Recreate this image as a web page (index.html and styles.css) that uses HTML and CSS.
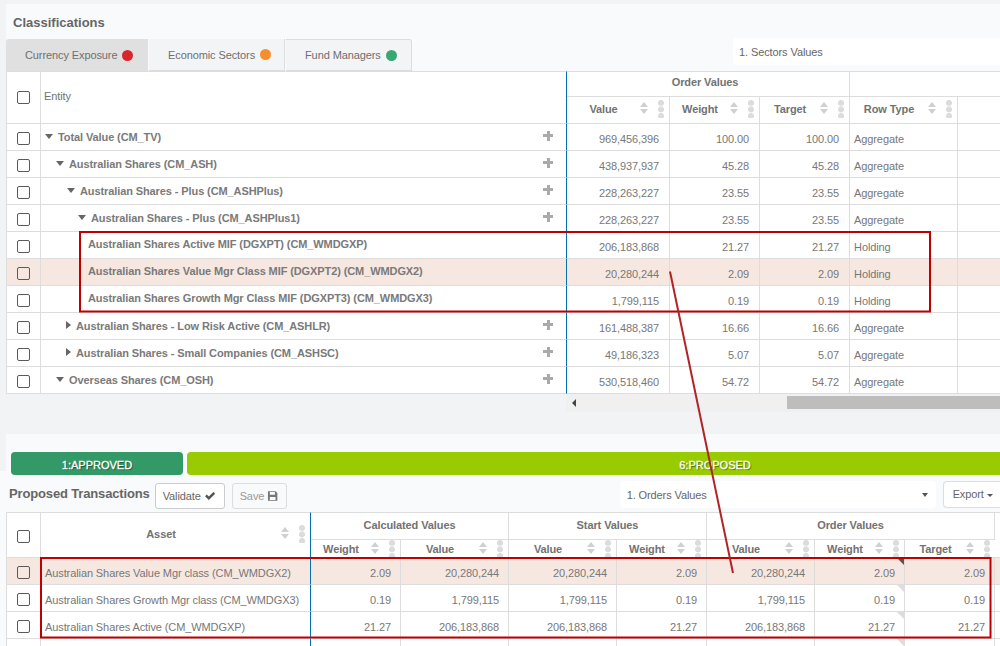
FILE: index.html
```html
<!DOCTYPE html>
<html>
<head>
  <title>Classifications</title>
  <link rel="stylesheet" href="styles.css">
</head>
<body>
  <section class="top-panel">
    <h3 class="panel-title">Classifications</h3>
    <div class="tab-row">
      <div class="tabs">
        <div class="tab active">Currency Exposure <span class="dot red"></span></div>
        <div class="tab">Economic Sectors <span class="dot orange"></span></div>
        <div class="tab last">Fund Managers <span class="dot green"></span></div>
      </div>
      <div class="view-select">1. Sectors Values</div>
    </div>

    <div class="table-wrap">
      <table class="grid">
        <colgroup>
          <col class="c-check"><col class="c-entity"><col class="c-value"><col class="c-w90"><col class="c-w90"><col class="c-type"><col class="c-rest">
        </colgroup>
        <thead>
          <tr class="group-row">
            <th rowspan="2" class="first"><span class="check"></span></th>
            <th rowspan="2" class="entity-head pin">Entity</th>
            <th colspan="3"><span class="group-label">Order Values</span></th>
            <th colspan="2"></th>
          </tr>
          <tr class="sub-row">
            <th><div class="head"><span class="label">Value</span><i class="sort"></i><i class="dots"></i></div></th>
            <th><div class="head"><span class="label">Weight</span><i class="sort"></i><i class="dots"></i></div></th>
            <th><div class="head"><span class="label">Target</span><i class="sort"></i><i class="dots"></i></div></th>
            <th><div class="head"><span class="label">Row Type</span><i class="sort"></i><i class="dots"></i></div></th>
            <th></th>
          </tr>
        </thead>
        <tbody>
          <tr>
            <td class="first"><span class="check"></span></td>
            <td class="pin"><div class="name lvl0"><i class="caret-down"></i>Total Value (CM_TV)<i class="plus"></i></div></td>
            <td class="num">969,456,396</td><td class="num">100.00</td><td class="num">100.00</td><td class="txt">Aggregate</td><td></td>
          </tr>
          <tr>
            <td class="first"><span class="check"></span></td>
            <td class="pin"><div class="name lvl1"><i class="caret-down"></i>Australian Shares (CM_ASH)<i class="plus"></i></div></td>
            <td class="num">438,937,937</td><td class="num">45.28</td><td class="num">45.28</td><td class="txt">Aggregate</td><td></td>
          </tr>
          <tr>
            <td class="first"><span class="check"></span></td>
            <td class="pin"><div class="name lvl2"><i class="caret-down"></i>Australian Shares - Plus (CM_ASHPlus)<i class="plus"></i></div></td>
            <td class="num">228,263,227</td><td class="num">23.55</td><td class="num">23.55</td><td class="txt">Aggregate</td><td></td>
          </tr>
          <tr>
            <td class="first"><span class="check"></span></td>
            <td class="pin"><div class="name lvl3"><i class="caret-down"></i>Australian Shares - Plus (CM_ASHPlus1)<i class="plus"></i></div></td>
            <td class="num">228,263,227</td><td class="num">23.55</td><td class="num">23.55</td><td class="txt">Aggregate</td><td></td>
          </tr>
          <tr>
            <td class="first"><span class="check"></span></td>
            <td class="pin"><div class="name leaf">Australian Shares Active MIF (DGXPT) (CM_WMDGXP)</div></td>
            <td class="num">206,183,868</td><td class="num">21.27</td><td class="num">21.27</td><td class="txt">Holding</td><td></td>
          </tr>
          <tr class="picked">
            <td class="first"><span class="check"></span></td>
            <td class="pin"><div class="name leaf">Australian Shares Value Mgr Class MIF (DGXPT2) (CM_WMDGX2)</div></td>
            <td class="num">20,280,244</td><td class="num">2.09</td><td class="num">2.09</td><td class="txt">Holding</td><td></td>
          </tr>
          <tr>
            <td class="first"><span class="check"></span></td>
            <td class="pin"><div class="name leaf">Australian Shares Growth Mgr Class MIF (DGXPT3) (CM_WMDGX3)</div></td>
            <td class="num">1,799,115</td><td class="num">0.19</td><td class="num">0.19</td><td class="txt">Holding</td><td></td>
          </tr>
          <tr>
            <td class="first"><span class="check"></span></td>
            <td class="pin"><div class="name lvl2r"><i class="caret-right"></i>Australian Shares - Low Risk Active (CM_ASHLR)<i class="plus"></i></div></td>
            <td class="num">161,488,387</td><td class="num">16.66</td><td class="num">16.66</td><td class="txt">Aggregate</td><td></td>
          </tr>
          <tr>
            <td class="first"><span class="check"></span></td>
            <td class="pin"><div class="name lvl2r"><i class="caret-right"></i>Australian Shares - Small Companies (CM_ASHSC)<i class="plus"></i></div></td>
            <td class="num">49,186,323</td><td class="num">5.07</td><td class="num">5.07</td><td class="txt">Aggregate</td><td></td>
          </tr>
          <tr>
            <td class="first"><span class="check"></span></td>
            <td class="pin"><div class="name lvl1"><i class="caret-down"></i>Overseas Shares (CM_OSH)<i class="plus"></i></div></td>
            <td class="num">530,518,460</td><td class="num">54.72</td><td class="num">54.72</td><td class="txt">Aggregate</td><td></td>
          </tr>
        </tbody>
      </table>
    </div>
    <div class="h-scroll"><i class="arrow-left"></i><span class="thumb"></span></div>
  </section>

  <section class="bottom-panel">
    <div class="status-bar">
      <div class="status approved">1:APPROVED</div>
      <div class="status proposed">6:PROPOSED</div>
    </div>
    <div class="toolbar">
      <h3 class="toolbar-title">Proposed Transactions</h3>
      <button class="btn validate">Validate
        <svg class="ico" viewBox="0 0 12 12"><path d="M1 6.3 L2.8 4.5 L4.8 6.5 L9.4 1.9 L11.2 3.7 L4.8 10.1 Z" fill="#555"/></svg>
      </button>
      <button class="btn muted">Save
        <svg class="ico" viewBox="0 0 12 12"><path fill-rule="evenodd" d="M1 1 H9.2 L11 2.8 V11 H1 Z M3 1.8 V4.6 H8.4 V1.8 Z M3 7 V10.2 H9 V7 Z" fill="#777"/></svg>
      </button>
      <div class="orders-select">1. Orders Values<i class="select-caret"></i></div>
      <button class="btn export">Export<i class="export-caret"></i></button>
    </div>

    <div class="table-wrap inset">
      <table class="grid grid-bottom">
        <colgroup>
          <col class="c-check"><col class="c-asset"><col class="c-w90"><col class="c-w108"><col class="c-w108"><col class="c-w90"><col class="c-w108"><col class="c-w90"><col class="c-w90"><col class="c-tail">
        </colgroup>
        <thead>
          <tr class="group-row">
            <th rowspan="2" class="first"><span class="check"></span></th>
            <th rowspan="2" class="pin"><div class="head"><span class="label">Asset</span><i class="sort"></i><i class="dots"></i></div></th>
            <th colspan="2">Calculated Values</th>
            <th colspan="2">Start Values</th>
            <th colspan="3">Order Values</th>
            <th rowspan="2" class="tail"></th>
          </tr>
          <tr class="sub-row">
            <th><div class="head"><span class="label">Weight</span><i class="sort"></i><i class="dots"></i></div></th>
            <th><div class="head"><span class="label">Value</span><i class="sort"></i><i class="dots"></i></div></th>
            <th><div class="head"><span class="label">Value</span><i class="sort"></i><i class="dots"></i></div></th>
            <th><div class="head"><span class="label">Weight</span><i class="sort"></i><i class="dots"></i></div></th>
            <th><div class="head"><span class="label">Value</span><i class="sort"></i><i class="dots"></i></div></th>
            <th><div class="head"><span class="label">Weight</span><i class="sort"></i><i class="dots"></i></div></th>
            <th><div class="head"><span class="label">Target</span><i class="sort"></i><i class="dots"></i></div></th>
          </tr>
        </thead>
        <tbody>
          <tr class="picked">
            <td class="first"><span class="check"></span></td>
            <td class="pin txt">Australian Shares Value Mgr class (CM_WMDGX2)</td>
            <td class="num">2.09</td><td class="num">20,280,244</td><td class="num">20,280,244</td><td class="num">2.09</td><td class="num">20,280,244</td>
            <td class="num flag dark">2.09</td><td class="num">2.09</td><td class="tail"></td>
          </tr>
          <tr>
            <td class="first"><span class="check"></span></td>
            <td class="pin txt">Australian Shares Growth Mgr class (CM_WMDGX3)</td>
            <td class="num">0.19</td><td class="num">1,799,115</td><td class="num">1,799,115</td><td class="num">0.19</td><td class="num">1,799,115</td>
            <td class="num flag">0.19</td><td class="num">0.19</td><td class="tail"></td>
          </tr>
          <tr>
            <td class="first"><span class="check"></span></td>
            <td class="pin txt">Australian Shares Active (CM_WMDGXP)</td>
            <td class="num">21.27</td><td class="num">206,183,868</td><td class="num">206,183,868</td><td class="num">21.27</td><td class="num">206,183,868</td>
            <td class="num flag">21.27</td><td class="num">21.27</td><td class="tail"></td>
          </tr>
          <tr>
            <td class="first"></td><td class="pin"></td><td></td><td></td><td></td><td></td><td></td><td class="flag"></td><td></td><td class="tail"></td>
          </tr>
        </tbody>
      </table>
    </div>
  </section>

  <!-- hand drawn annotations on top of the screenshot -->
  <svg class="marks" viewBox="0 0 1000 646">
    <rect x="80" y="232" width="850" height="79.5" />
    <rect x="41" y="558" width="949.5" height="79.5" />
    <line x1="670" y1="271.5" x2="733" y2="573" />
  </svg>
</body>
</html>
```

FILE: styles.css
```css
* { box-sizing: border-box; }

html, body { height: 100%; }

body {
  position: relative;
  width: 1000px;
  height: 646px;
  margin: 0;
  overflow: hidden;
  background: #f2f3f5;
  font-family: "Liberation Sans", Arial, sans-serif;
  font-size: 11px;
  letter-spacing: -0.1px;
  color: #707070;
}

/* top panel */
.top-panel { margin: 4px 0 0 6px; height: 430px; }

.panel-title {
  height: 35px;
  margin: 0;
  padding: 11px 0 0 7px;
  background: #f9fafc;
  font-size: 13px;
  line-height: 15px;
  letter-spacing: 0;
  color: #666;
}

.tab-row {
  display: flex;
  justify-content: space-between;
  align-items: flex-start;
  height: 32px;
  background: #f9fafc;
}

.tabs { display: flex; gap: 1px; }

.tab {
  display: flex;
  align-items: center;
  gap: 5px;
  width: 136px;
  height: 32px;
  padding-left: 19px;
  white-space: nowrap;
  background: #f3f4f6;
  border-bottom: 1px solid #ddd;
  border-right: 1px solid #ddd;
  color: #6f6f6f;
}
.tab.active { width: 142px; background: #e0e0e0; border: 0; border-radius: 3px 0 0 0; }
.tab.last { width: 126px; border-top: 1px solid #ddd; border-radius: 0 3px 0 0; }

.dot { width: 11px; height: 11px; border-radius: 50%; }
.dot.red { background: #d9262c; }
.dot.orange { background: #f68e2f; }
.dot.green { background: #36a874; }

.view-select {
  width: 267px;
  height: 27px;
  margin-top: -1px;
  padding: 1px 6px 0;
  background: #fff;
  border-radius: 4px 0 0 4px;
  line-height: 27px;
  color: #666;
}

/* tables */
.table-wrap { overflow: hidden; }
.table-wrap.inset { margin-left: 6px; }

.grid {
  width: 994px;
  table-layout: fixed;
  border-collapse: separate;
  border-spacing: 0;
  background: #fff;
}

.c-check { width: 35px; }
.c-entity { width: 526px; }
.c-value { width: 103px; }
.c-w90 { width: 90px; }
.c-w108 { width: 108px; }
.c-type { width: 108px; }
.c-rest { width: 42px; }
.c-asset { width: 270px; }
.c-tail { width: 5px; }

.grid th, .grid td {
  padding: 0;
  border-right: 1px solid #ddd;
  border-bottom: 1px solid #ddd;
}
.grid thead tr:first-child th { border-top: 1px solid #ddd; }
.grid .first { border-left: 1px solid #ddd; text-align: center; }
.grid .pin { border-right-color: #0070b0; }
.grid .tail, .grid tr > :last-child { border-right: 0; }

.grid th { font-weight: bold; color: #727272; text-align: center; }
.grid tbody tr { height: 27px; }

.group-row { height: 26px; }
.sub-row { height: 27px; }
.sub-row .head { padding-bottom: 2px; }
.grid-bottom .group-row { height: 28px; }
.grid-bottom .group-row th { padding-bottom: 2px; }
.grid-bottom .sub-row { height: 18px; }
.grid-bottom .sub-row .head { height: 17px; padding-bottom: 0; overflow: hidden; }

.group-label { display: block; padding: 0 6px 4px 0; }

.grid .entity-head { padding: 0 0 3px 3px; text-align: left; font-weight: normal; }

.head { display: flex; align-items: center; padding-right: 5px; }
.head .label { flex: 1; text-align: center; }

.sort {
  position: relative;
  width: 9px;
  height: 12px;
  margin: -2px 9px 0 0;
}
.sort::before, .sort::after {
  content: "";
  position: absolute;
  left: 0;
  border-left: 4.5px solid transparent;
  border-right: 4.5px solid transparent;
}
.sort::before { top: 0; border-bottom: 5px solid #d0d0d0; }
.sort::after { bottom: 0; border-top: 5px solid #d0d0d0; }

.dots {
  flex: none;
  width: 6px;
  height: 18px;
  background: radial-gradient(circle at 3px 3px, #dcdcdc 2.8px, transparent 3.2px) 0 0 / 6px 6.5px;
}

.check {
  display: inline-block;
  width: 13px;
  height: 13px;
  margin: 0 1px 1px 0;
  vertical-align: middle;
  background: #fff;
  border: 1.5px solid #5a5a5a;
  border-radius: 2px;
}
tbody .check { margin: 3px 1px 0 0; }
.grid-bottom thead .check { margin: 5px 1px 0 0; }

.name {
  display: flex;
  align-items: center;
  height: 26px;
  padding-bottom: 1px;
  padding-right: 13px;
  font-weight: bold;
  color: #7a7a7a;
}
.lvl0 { padding-left: 4px; }
.lvl1 { padding-left: 15px; }
.lvl2 { padding-left: 26px; }
.lvl3 { padding-left: 37px; }
.lvl2r { padding-left: 25px; }
.leaf { padding: 0 0 3px 47px; }

.caret-down {
  width: 0;
  height: 0;
  margin-right: 5px;
  border-left: 4px solid transparent;
  border-right: 4px solid transparent;
  border-top: 5px solid #666;
}
.caret-right {
  width: 0;
  height: 0;
  margin: -2px 5px 0 0;
  border-top: 4px solid transparent;
  border-bottom: 4px solid transparent;
  border-left: 5px solid #666;
}

.plus {
  width: 10px;
  height: 10px;
  margin: -2px 0 0 auto;
  background:
    linear-gradient(#aaa, #aaa) center / 10px 3px no-repeat,
    linear-gradient(#aaa, #aaa) center / 3px 10px no-repeat;
}

.grid .num { padding: 3px 10px 0 0; text-align: right; color: #787878; }
.grid .txt { padding: 3px 0 0 4px; color: #777; }
.grid-bottom .txt { padding-top: 4px; }
.grid-bottom .num { padding: 4px 9px 0 0; }

.picked td { background: #f6e8e1; }
.picked .check { background: transparent; }

.flag { position: relative; }
.flag::after {
  content: "";
  position: absolute;
  top: 0;
  right: 0;
  border-top: 7px solid #ddd;
  border-left: 7px solid transparent;
}
.flag.dark::after { border-top-color: #555; }

.h-scroll {
  display: flex;
  align-items: center;
  height: 18px;
  margin-left: 560px;
  padding: 0 0 1px 6px;
  background: #f0f0f0;
}
.arrow-left {
  width: 0;
  height: 0;
  border-top: 4px solid transparent;
  border-bottom: 4px solid transparent;
  border-right: 4px solid #444;
}
.thumb { width: 213px; height: 13px; margin-left: auto; background: #bdbdbd; }

/* bottom panel */
.bottom-panel {
  height: 212px;
  padding-top: 18px;
  background: linear-gradient(#f2f3f5, #f2f3f5) left top / 6px 37px no-repeat, #f9fafc;
}

.status-bar { display: flex; gap: 4px; margin-left: 11px; }

.status {
  flex: none;
  height: 23px;
  border-radius: 4px;
  color: #fff;
  line-height: 26px;
  letter-spacing: 0;
  text-align: center;
  text-shadow: 1px 1px 1px rgba(0,0,0,0.5);
  -webkit-text-stroke: 0.3px #fff;
}
.approved { width: 172px; background: #339966; }
.proposed { width: 813px; padding-left: 243px; border-radius: 4px 0 0 4px; background: #99cc00; }

.toolbar {
  display: flex;
  align-items: flex-start;
  height: 37px;
  padding: 6px 0 0 9px;
}

.toolbar-title {
  margin: 5px 5px 0 0;
  font-size: 13px;
  line-height: 16px;
  letter-spacing: -0.15px;
  white-space: nowrap;
  color: #666;
}

.btn {
  display: flex;
  align-items: center;
  gap: 3px;
  flex: none;
  height: 26px;
  margin: 2px 7px 0 0;
  padding: 0 7px;
  background: #fff;
  border: 1px solid #ccc;
  border-radius: 3px;
  font: 11px "Liberation Sans", Arial, sans-serif;
  letter-spacing: -0.1px;
  color: #666;
}
.btn.validate { width: 70px; }
.btn.muted { width: 55px; background: transparent; border-color: #ddd; color: #999; }
.ico { width: 12px; height: 12px; }

.orders-select {
  display: flex;
  align-items: center;
  justify-content: space-between;
  flex: none;
  width: 316px;
  height: 27px;
  margin-left: 326px;
  padding: 0 6px 0 7px;
  background: #fff;
  border-radius: 4px;
  color: #666;
}
.select-caret {
  width: 0;
  height: 0;
  margin-right: 2px;
  border-left: 3.5px solid transparent;
  border-right: 3.5px solid transparent;
  border-top: 4px solid #555;
}

.btn.export {
  width: 57px;
  height: 27px;
  margin: 0 0 0 7px;
  padding: 0 0 2px 9px;
  border-color: #ddd;
  border-right: 0;
  border-radius: 4px 0 0 4px;
}
.export-caret {
  width: 0;
  height: 0;
  margin-top: 3px;
  border-left: 3.5px solid transparent;
  border-right: 3.5px solid transparent;
  border-top: 3.5px solid #555;
}

.marks {
  position: absolute;
  top: 0;
  left: 0;
  width: 1000px;
  height: 646px;
  pointer-events: none;
}
.marks rect { fill: none; stroke: #c00000; stroke-width: 2; }
.marks line { stroke: #b02428; stroke-width: 2; }
```
